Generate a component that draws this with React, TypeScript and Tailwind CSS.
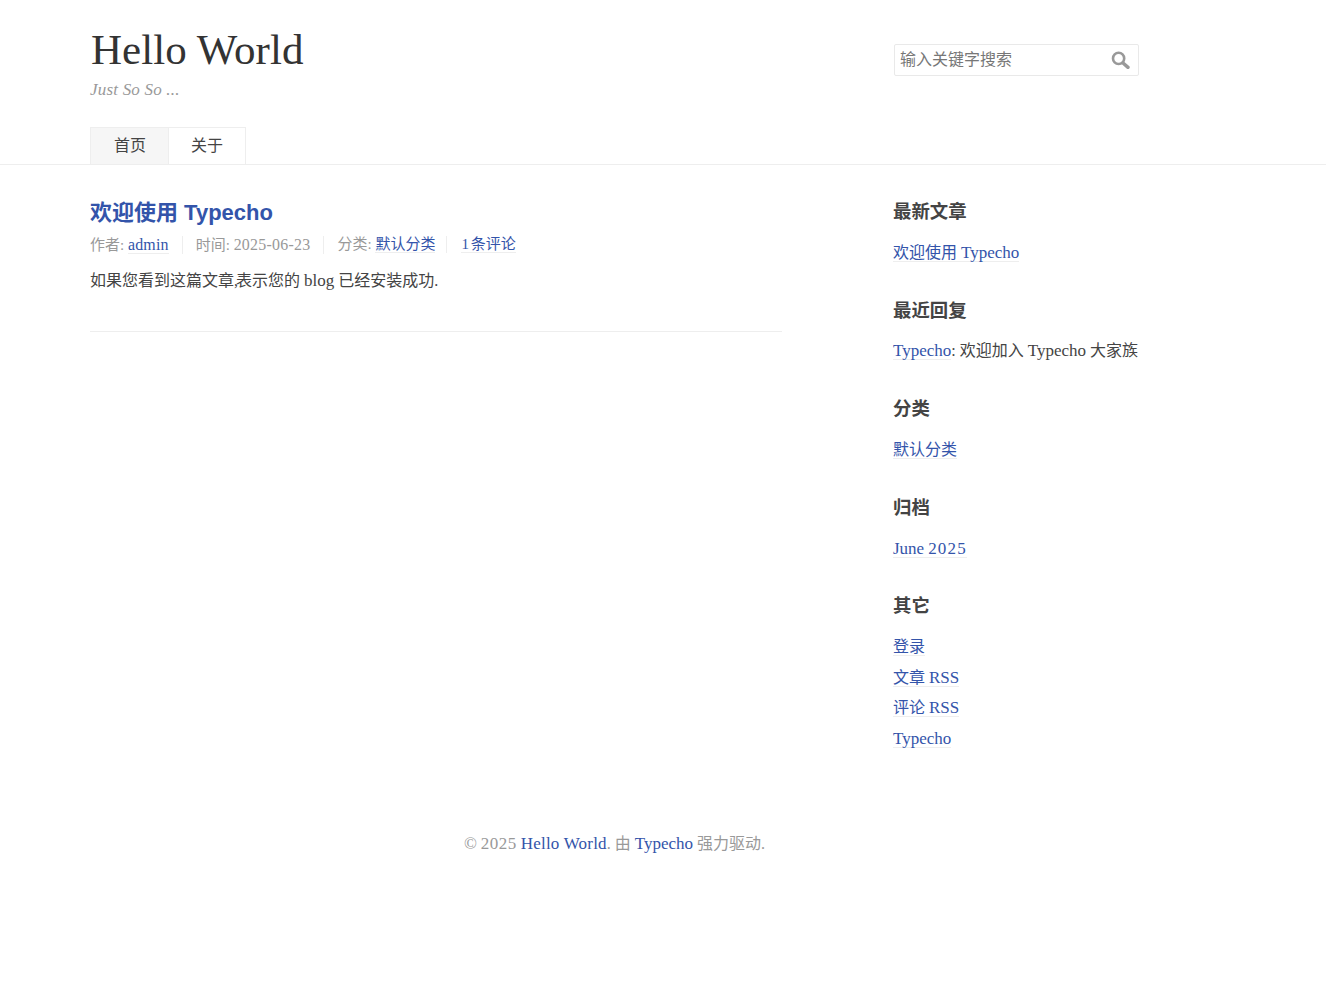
const SERIF = "font-['Liberation_Serif','Noto_Sans_CJK_SC',serif]";
const SANS = "font-['Liberation_Sans','Noto_Sans_CJK_SC',sans-serif]";

const TextLink = ({ children }: { children: React.ReactNode }) => (
  <a href="#" className="border-b border-[#eeeeee] text-[#3354aa]">
    {children}
  </a>
);

// latin runs are set a bit larger, the serif here is smaller on the body than the one in the design
const Lat = ({ children }: { children: React.ReactNode }) => <span className="text-[1.0625em]">{children}</span>;

const Widget = ({ title, children }: { title: string; children: React.ReactNode }) => (
  <section className="mb-[28.16px]">
    <h3 className={`${SANS} mb-[11.5px] text-[18.4px] leading-[28.3px] font-bold text-[#444444]`}>{title}</h3>
    <ul>{children}</ul>
  </section>
);

const Item = ({ children }: { children: React.ReactNode }) => (
  <li className="py-[3px] leading-[24.64px] whitespace-nowrap">{children}</li>
);

const SearchIcon = () => (
  <svg width="19" height="18" viewBox="0 0 19 18" fill="none" className="block">
    <circle cx="7.6" cy="7.4" r="5.6" stroke="#999999" strokeWidth="2.6" />
    <path d="M12 12 17 16.4" stroke="#999999" strokeWidth="3.4" strokeLinecap="round" />
  </svg>
);

export default function App() {
  return (
    <div className={`${SERIF} min-h-[987px] bg-white text-base text-[#444444]`}>
      <header className="border-b border-[#eeeeee]">
        <div className="flex pl-[90px]">
          <div className="w-[804px]">
            <a href="#" className="mt-[26px] ml-px block text-[43px] leading-[47px] tracking-[0.05px] text-[#333333]">
              Hello World
            </a>
            <p className="mt-[5px] text-[17px] leading-[24px] tracking-[0.2px] text-[#999999] italic">Just So So ...</p>
            <nav className="mt-[25px] flex h-[37px]">
              <a href="#" className="border border-b-0 border-[#eeeeee] bg-[#f6f6f6] pr-[22px] pl-[23px] leading-[36px]">
                首页
              </a>
              <a href="#" className="border border-b-0 border-l-0 border-[#eeeeee] px-[22px] leading-[36px]">
                关于
              </a>
            </nav>
          </div>
          <form className="mt-[44px] flex h-[32px] w-[245px] items-center justify-between rounded-[2px] border border-[#e9e9e9] pr-[8px] pl-[5px]">
            <span className="text-[#777777]">输入关键字搜索</span>
            <SearchIcon />
          </form>
        </div>
      </header>

      <div className="flex pl-[90px]">
        <main className="mr-[111px] w-[692px]">
          <article className="mt-[32px] h-[135px] border-b border-[#eeeeee]">
            <h2 className={`${SANS} text-[22px] leading-[32px] font-bold text-[#3354aa]`}>欢迎使用 Typecho</h2>
            <ul className="mt-[7px] flex h-[17px] items-center text-[15px] leading-[17px] text-[#999999]">
              <li className="border-r border-[#eeeeee] pr-[13px]">
                作者: <TextLink><span className="text-[1.0625em] tracking-[0.2px]">admin</span></TextLink>
              </li>
              <li className="border-r border-[#eeeeee] px-[13px]">
                时间: <span className="text-[1.0625em] tracking-[0.25px]">2025-06-23</span>
              </li>
              <li className="border-r border-[#eeeeee] pr-[11px] pl-[13px]">
                分类: <TextLink>默认分类</TextLink>
              </li>
              <li className="pl-[14px]">
                <TextLink><span className="tracking-[-1px]">1 </span>条评论</TextLink>
              </li>
            </ul>
            <p className="mt-[16px] leading-[24.64px]">
              如果您看到这篇文章<span className="tracking-[-2px]">,</span>表示您的 <Lat>blog</Lat> 已经安装成功.
            </p>
          </article>
        </main>

        <aside className="mt-[33px] w-[246px]">
          <Widget title="最新文章">
            <Item>
              <TextLink>欢迎使用 <Lat>Typecho</Lat></TextLink>
            </Item>
          </Widget>
          <Widget title="最近回复">
            <Item>
              <TextLink><Lat>Typecho</Lat></TextLink>: 欢迎加入 <Lat>Typecho</Lat> 大家族
            </Item>
          </Widget>
          <Widget title="分类">
            <Item>
              <TextLink>默认分类</TextLink>
            </Item>
          </Widget>
          <Widget title="归档">
            <Item>
              <TextLink><Lat>June</Lat> <span className="text-[1.0625em] tracking-[1.2px]">2025</span></TextLink>
            </Item>
          </Widget>
          <Widget title="其它">
            <Item>
              <TextLink>登录</TextLink>
            </Item>
            <Item>
              <TextLink>文章 <Lat>RSS</Lat></TextLink>
            </Item>
            <Item>
              <TextLink>评论 <Lat>RSS</Lat></TextLink>
            </Item>
            <Item>
              <TextLink><Lat>Typecho</Lat></TextLink>
            </Item>
          </Widget>
        </aside>
      </div>

      <footer className="mt-[49px] w-[1229px] text-center leading-[24.64px] text-[#999999]">
        <Lat>©</Lat> <span className="text-[1.0625em] tracking-[0.5px]">2025</span>{" "}
        <a href="#" className="text-[#3354aa]"><span className="text-[1.0625em] tracking-[0.2px]">Hello World</span></a>. 由{" "}
        <a href="#" className="text-[#3354aa]"><Lat>Typecho</Lat></a> 强力驱动.
      </footer>
    </div>
  );
}
